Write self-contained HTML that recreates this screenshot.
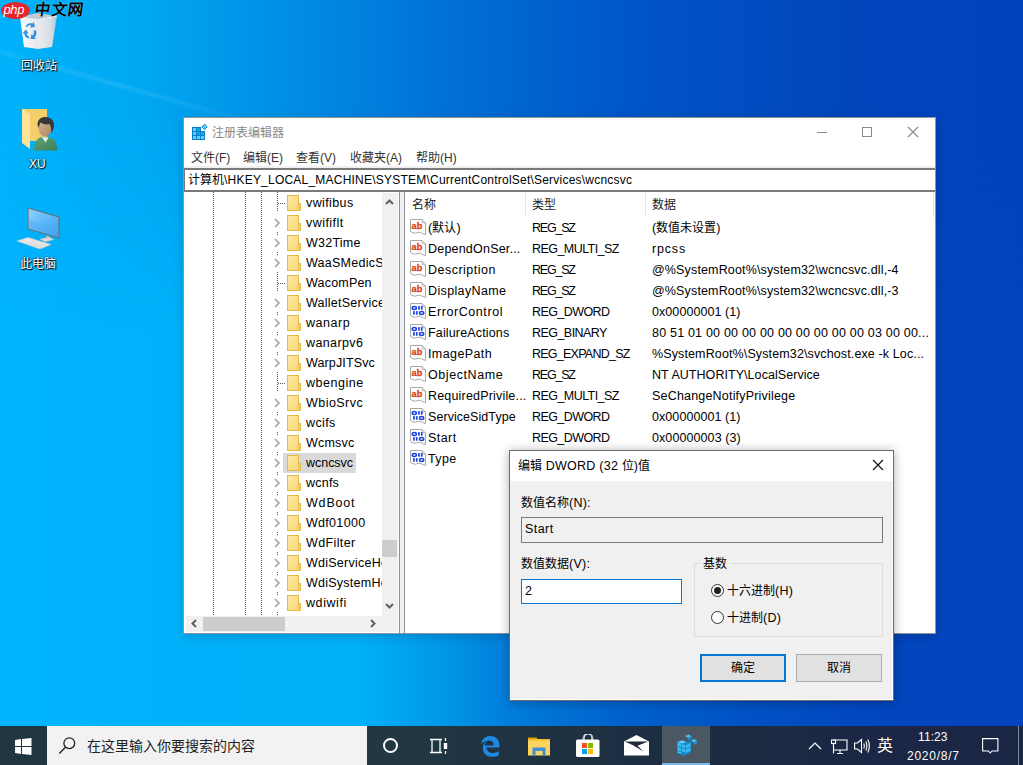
<!DOCTYPE html><html lang="zh-CN"><head><meta charset="utf-8"><style>
*{margin:0;padding:0;box-sizing:border-box}
html,body{width:1023px;height:765px;overflow:hidden}
body{position:relative;font-family:"Liberation Sans",sans-serif;font-size:12px;color:#000;
background:linear-gradient(90deg,#00b4fd 0px,#00b0f9 360px,#0098e8 440px,#007ad8 520px,#0062cc 620px,#0052c4 740px,#0246be 880px,#0244be 1023px)}
.bgtop{position:absolute;left:0;top:0;width:1023px;height:640px;background:linear-gradient(90deg,#00b2fb 0px,#00a8f3 140px,#008ee4 290px,#0070d6 450px,#0054c6 640px,#0246bc 840px,#0242bc 1023px);-webkit-mask-image:linear-gradient(180deg,#000 0,#000 115px,transparent 330px)}
.beam{position:absolute;left:-5px;top:49px;width:330px;height:3px;background:linear-gradient(90deg,rgba(255,255,255,.10),rgba(255,255,255,.13) 40%,rgba(255,255,255,.06) 75%,transparent);transform:rotate(15.6deg);transform-origin:0 0;filter:blur(1.5px)}
.t{position:absolute;white-space:nowrap;line-height:14px;font-size:12.5px;letter-spacing:0.25px}
.cj{font-size:12px;letter-spacing:0}
.win{position:absolute;left:183px;top:117px;width:753px;height:517px;background:#fff;border:1px solid rgba(50,60,70,.55);box-shadow:0 3px 10px rgba(0,0,20,.16)}
.dlg{position:absolute;left:509px;top:450px;width:385px;height:251px;background:#f0f0f0;border:1px solid rgba(0,0,0,.55);box-shadow:inset -1px -1px 0 #fff,0 1px 10px rgba(0,0,30,.32)}
.tb{position:absolute;left:0;top:726px;width:1023px;height:39px;background:linear-gradient(90deg,#213843 0%,#213743 40%,#1e3042 58%,#1c2b42 72%,#1b2744 85%,#1b2645 100%)}
.dv{position:absolute;width:1px;background-image:linear-gradient(#5a5a5a 50%,transparent 50%);background-size:1px 2px}
.dh{position:absolute;height:1px;background-image:linear-gradient(90deg,#5a5a5a 50%,transparent 50%);background-size:2px 1px}
.fold{position:absolute;width:14px;height:16px}
.chev{position:absolute;width:8px;height:10px}
.ico{position:absolute;width:16px;height:16px}
</style></head><body>
<div class="bgtop"></div><div class="beam"></div>
<div class="win"></div>
<svg style="position:absolute;left:191px;top:123px" width="17" height="18" viewBox="0 0 17 18">
<path d="M1 4H10V8H14V17H1Z" fill="#0a7cc8"/>
<g fill="#5fd2ff"><rect x="2" y="5" width="3" height="3"/><rect x="2" y="9" width="3" height="3"/><rect x="2" y="13" width="3" height="3"/><rect x="6" y="13" width="3" height="3"/><rect x="10" y="13" width="3" height="3"/></g>
<g fill="#12a6e2"><rect x="6" y="5" width="3" height="3"/><rect x="6" y="9" width="3" height="3"/><rect x="10" y="9" width="3" height="3"/></g>
<path d="M13.5 1.2L16.2 3.9L13.5 6.6L10.8 3.9Z" fill="#5fd2ff" stroke="#0a7cc8" stroke-width="1"/>
</svg>
<div class="t" style="left:212px;top:126px;color:#8a8a8a"><span class="cj">注册表编辑器</span></div>
<div style="position:absolute;left:817px;top:132px;width:10px;height:1px;background:#8a8a8a"></div>
<div style="position:absolute;left:862px;top:127px;width:10px;height:10px;border:1px solid #8a8a8a"></div>
<svg style="position:absolute;left:907px;top:126px" width="12" height="12" viewBox="0 0 12 12"><path d="M1 1L11 11M11 1L1 11" stroke="#8a8a8a" stroke-width="1.1"/></svg>
<div class="t" style="left:191px;top:151px;color:#333;font-size:12px;letter-spacing:0"><span class="cj">文件</span>(F)</div>
<div class="t" style="left:243px;top:151px;color:#333;font-size:12px;letter-spacing:0"><span class="cj">编辑</span>(E)</div>
<div class="t" style="left:296px;top:151px;color:#333;font-size:12px;letter-spacing:0"><span class="cj">查看</span>(V)</div>
<div class="t" style="left:350px;top:151px;color:#333;font-size:12px;letter-spacing:0"><span class="cj">收藏夹</span>(A)</div>
<div class="t" style="left:416px;top:151px;color:#333;font-size:12px;letter-spacing:0"><span class="cj">帮助</span>(H)</div>
<div style="position:absolute;left:184px;top:166px;width:751px;height:2px;background:#f0f0f0"></div>
<div style="position:absolute;left:184px;top:168px;width:751px;height:24px;border:1px solid #7a7a7a;border-top-width:2px;border-bottom-width:2px;border-right:0;background:#fff"></div>
<div class="t" style="left:188px;top:173px;font-size:12px;letter-spacing:0.22px"><span class="cj">计算机</span>\HKEY_LOCAL_MACHINE\SYSTEM\CurrentControlSet\Services\wcncsvc</div>
<div style="position:absolute;left:184px;top:192px;width:216px;height:441px;background:#fff;border-right:1px solid #8a8f99"></div>
<div style="position:absolute;left:400px;top:192px;width:4px;height:441px;background:#f0f0f0"></div>
<div style="position:absolute;left:404px;top:192px;width:1px;height:441px;background:#8a8f99"></div>
<div style="position:absolute;left:382px;top:193px;width:16px;height:423px;background:#f0f0f0"></div>
<div style="position:absolute;left:382px;top:540px;width:15px;height:17px;background:#cdcdcd"></div>
<div style="position:absolute;left:186px;top:616px;width:212px;height:16px;background:#f0f0f0"></div>
<div style="position:absolute;left:203px;top:617px;width:82px;height:14px;background:#cdcdcd"></div>
<svg style="position:absolute;left:385px;top:198px" width="9" height="8" viewBox="0 0 9 8"><path d="M1 6L4.5 2.5L8 6" fill="none" stroke="#606060" stroke-width="2"/></svg>
<svg style="position:absolute;left:385px;top:602px" width="9" height="8" viewBox="0 0 9 8"><path d="M1 2L4.5 5.5L8 2" fill="none" stroke="#606060" stroke-width="2"/></svg>
<svg style="position:absolute;left:190px;top:619px" width="8" height="9" viewBox="0 0 8 9"><path d="M6 1L2.5 4.5L6 8" fill="none" stroke="#606060" stroke-width="2"/></svg>
<svg style="position:absolute;left:369px;top:619px" width="8" height="9" viewBox="0 0 8 9"><path d="M2 1L5.5 4.5L2 8" fill="none" stroke="#606060" stroke-width="2"/></svg>
<div class="dv" style="left:213px;top:192px;height:423px"></div>
<div class="dv" style="left:245px;top:192px;height:423px"></div>
<div class="dv" style="left:261px;top:192px;height:423px"></div>
<div style="position:absolute;left:185px;top:191px;width:197px;height:424px;overflow:hidden">
<svg class="fold" style="left:102px;top:4px" width="14" height="16" viewBox="0 0 14 16">
<defs><linearGradient id="fg" x1="0" y1="0" x2="1" y2="1"><stop offset="0" stop-color="#fdeaa8"/><stop offset="1" stop-color="#f8d675"/></linearGradient></defs>
<rect x="0.5" y="0.5" width="11" height="15" fill="url(#fg)" stroke="#e6b944"/>
<path d="M11.5 8.5H13.5V15.5H11.5" fill="#f5cf66" stroke="#e6b944"/>
</svg>
<div class="t" style="left:121px;top:5px;letter-spacing:0.386px">vwifibus</div>
<div class="dv" style="left:92px;top:1px;height:20px"></div>
<div class="dh" style="left:93px;top:12px;width:8px"></div>
<svg class="fold" style="left:102px;top:24px" width="14" height="16" viewBox="0 0 14 16">
<defs><linearGradient id="fg" x1="0" y1="0" x2="1" y2="1"><stop offset="0" stop-color="#fdeaa8"/><stop offset="1" stop-color="#f8d675"/></linearGradient></defs>
<rect x="0.5" y="0.5" width="11" height="15" fill="url(#fg)" stroke="#e6b944"/>
<path d="M11.5 8.5H13.5V15.5H11.5" fill="#f5cf66" stroke="#e6b944"/>
</svg>
<div class="t" style="left:121px;top:25px;letter-spacing:0.457px">vwififlt</div>
<svg class="chev" style="left:88px;top:27px" viewBox="0 0 8 10"><path d="M2 1L6 5L2 9" fill="none" stroke="#a0a0a0" stroke-width="1.5"/></svg>
<div class="dv" style="left:92px;top:41px;height:4px"></div>
<svg class="fold" style="left:102px;top:44px" width="14" height="16" viewBox="0 0 14 16">
<defs><linearGradient id="fg" x1="0" y1="0" x2="1" y2="1"><stop offset="0" stop-color="#fdeaa8"/><stop offset="1" stop-color="#f8d675"/></linearGradient></defs>
<rect x="0.5" y="0.5" width="11" height="15" fill="url(#fg)" stroke="#e6b944"/>
<path d="M11.5 8.5H13.5V15.5H11.5" fill="#f5cf66" stroke="#e6b944"/>
</svg>
<div class="t" style="left:121px;top:45px;letter-spacing:0.233px">W32Time</div>
<svg class="chev" style="left:88px;top:47px" viewBox="0 0 8 10"><path d="M2 1L6 5L2 9" fill="none" stroke="#a0a0a0" stroke-width="1.5"/></svg>
<div class="dv" style="left:92px;top:61px;height:4px"></div>
<svg class="fold" style="left:102px;top:64px" width="14" height="16" viewBox="0 0 14 16">
<defs><linearGradient id="fg" x1="0" y1="0" x2="1" y2="1"><stop offset="0" stop-color="#fdeaa8"/><stop offset="1" stop-color="#f8d675"/></linearGradient></defs>
<rect x="0.5" y="0.5" width="11" height="15" fill="url(#fg)" stroke="#e6b944"/>
<path d="M11.5 8.5H13.5V15.5H11.5" fill="#f5cf66" stroke="#e6b944"/>
</svg>
<div class="t" style="left:121px;top:65px;">WaaSMedicS</div>
<svg class="chev" style="left:88px;top:67px" viewBox="0 0 8 10"><path d="M2 1L6 5L2 9" fill="none" stroke="#a0a0a0" stroke-width="1.5"/></svg>
<div class="dv" style="left:92px;top:81px;height:4px"></div>
<svg class="fold" style="left:102px;top:84px" width="14" height="16" viewBox="0 0 14 16">
<defs><linearGradient id="fg" x1="0" y1="0" x2="1" y2="1"><stop offset="0" stop-color="#fdeaa8"/><stop offset="1" stop-color="#f8d675"/></linearGradient></defs>
<rect x="0.5" y="0.5" width="11" height="15" fill="url(#fg)" stroke="#e6b944"/>
<path d="M11.5 8.5H13.5V15.5H11.5" fill="#f5cf66" stroke="#e6b944"/>
</svg>
<div class="t" style="left:121px;top:85px;letter-spacing:0.2px">WacomPen</div>
<div class="dv" style="left:92px;top:81px;height:20px"></div>
<div class="dh" style="left:93px;top:92px;width:8px"></div>
<svg class="fold" style="left:102px;top:104px" width="14" height="16" viewBox="0 0 14 16">
<defs><linearGradient id="fg" x1="0" y1="0" x2="1" y2="1"><stop offset="0" stop-color="#fdeaa8"/><stop offset="1" stop-color="#f8d675"/></linearGradient></defs>
<rect x="0.5" y="0.5" width="11" height="15" fill="url(#fg)" stroke="#e6b944"/>
<path d="M11.5 8.5H13.5V15.5H11.5" fill="#f5cf66" stroke="#e6b944"/>
</svg>
<div class="t" style="left:121px;top:105px;">WalletService</div>
<svg class="chev" style="left:88px;top:107px" viewBox="0 0 8 10"><path d="M2 1L6 5L2 9" fill="none" stroke="#a0a0a0" stroke-width="1.5"/></svg>
<div class="dv" style="left:92px;top:121px;height:4px"></div>
<svg class="fold" style="left:102px;top:124px" width="14" height="16" viewBox="0 0 14 16">
<defs><linearGradient id="fg" x1="0" y1="0" x2="1" y2="1"><stop offset="0" stop-color="#fdeaa8"/><stop offset="1" stop-color="#f8d675"/></linearGradient></defs>
<rect x="0.5" y="0.5" width="11" height="15" fill="url(#fg)" stroke="#e6b944"/>
<path d="M11.5 8.5H13.5V15.5H11.5" fill="#f5cf66" stroke="#e6b944"/>
</svg>
<div class="t" style="left:121px;top:125px;letter-spacing:0.56px">wanarp</div>
<svg class="chev" style="left:88px;top:127px" viewBox="0 0 8 10"><path d="M2 1L6 5L2 9" fill="none" stroke="#a0a0a0" stroke-width="1.5"/></svg>
<div class="dv" style="left:92px;top:141px;height:4px"></div>
<svg class="fold" style="left:102px;top:144px" width="14" height="16" viewBox="0 0 14 16">
<defs><linearGradient id="fg" x1="0" y1="0" x2="1" y2="1"><stop offset="0" stop-color="#fdeaa8"/><stop offset="1" stop-color="#f8d675"/></linearGradient></defs>
<rect x="0.5" y="0.5" width="11" height="15" fill="url(#fg)" stroke="#e6b944"/>
<path d="M11.5 8.5H13.5V15.5H11.5" fill="#f5cf66" stroke="#e6b944"/>
</svg>
<div class="t" style="left:121px;top:145px;letter-spacing:0.386px">wanarpv6</div>
<svg class="chev" style="left:88px;top:147px" viewBox="0 0 8 10"><path d="M2 1L6 5L2 9" fill="none" stroke="#a0a0a0" stroke-width="1.5"/></svg>
<div class="dv" style="left:92px;top:161px;height:4px"></div>
<svg class="fold" style="left:102px;top:164px" width="14" height="16" viewBox="0 0 14 16">
<defs><linearGradient id="fg" x1="0" y1="0" x2="1" y2="1"><stop offset="0" stop-color="#fdeaa8"/><stop offset="1" stop-color="#f8d675"/></linearGradient></defs>
<rect x="0.5" y="0.5" width="11" height="15" fill="url(#fg)" stroke="#e6b944"/>
<path d="M11.5 8.5H13.5V15.5H11.5" fill="#f5cf66" stroke="#e6b944"/>
</svg>
<div class="t" style="left:121px;top:165px;letter-spacing:0.133px">WarpJITSvc</div>
<svg class="chev" style="left:88px;top:167px" viewBox="0 0 8 10"><path d="M2 1L6 5L2 9" fill="none" stroke="#a0a0a0" stroke-width="1.5"/></svg>
<div class="dv" style="left:92px;top:181px;height:4px"></div>
<svg class="fold" style="left:102px;top:184px" width="14" height="16" viewBox="0 0 14 16">
<defs><linearGradient id="fg" x1="0" y1="0" x2="1" y2="1"><stop offset="0" stop-color="#fdeaa8"/><stop offset="1" stop-color="#f8d675"/></linearGradient></defs>
<rect x="0.5" y="0.5" width="11" height="15" fill="url(#fg)" stroke="#e6b944"/>
<path d="M11.5 8.5H13.5V15.5H11.5" fill="#f5cf66" stroke="#e6b944"/>
</svg>
<div class="t" style="left:121px;top:185px;letter-spacing:0.529px">wbengine</div>
<div class="dv" style="left:92px;top:181px;height:20px"></div>
<div class="dh" style="left:93px;top:192px;width:8px"></div>
<svg class="fold" style="left:102px;top:204px" width="14" height="16" viewBox="0 0 14 16">
<defs><linearGradient id="fg" x1="0" y1="0" x2="1" y2="1"><stop offset="0" stop-color="#fdeaa8"/><stop offset="1" stop-color="#f8d675"/></linearGradient></defs>
<rect x="0.5" y="0.5" width="11" height="15" fill="url(#fg)" stroke="#e6b944"/>
<path d="M11.5 8.5H13.5V15.5H11.5" fill="#f5cf66" stroke="#e6b944"/>
</svg>
<div class="t" style="left:121px;top:205px;letter-spacing:0.457px">WbioSrvc</div>
<svg class="chev" style="left:88px;top:207px" viewBox="0 0 8 10"><path d="M2 1L6 5L2 9" fill="none" stroke="#a0a0a0" stroke-width="1.5"/></svg>
<div class="dv" style="left:92px;top:221px;height:4px"></div>
<svg class="fold" style="left:102px;top:224px" width="14" height="16" viewBox="0 0 14 16">
<defs><linearGradient id="fg" x1="0" y1="0" x2="1" y2="1"><stop offset="0" stop-color="#fdeaa8"/><stop offset="1" stop-color="#f8d675"/></linearGradient></defs>
<rect x="0.5" y="0.5" width="11" height="15" fill="url(#fg)" stroke="#e6b944"/>
<path d="M11.5 8.5H13.5V15.5H11.5" fill="#f5cf66" stroke="#e6b944"/>
</svg>
<div class="t" style="left:121px;top:225px;letter-spacing:0.375px">wcifs</div>
<svg class="chev" style="left:88px;top:227px" viewBox="0 0 8 10"><path d="M2 1L6 5L2 9" fill="none" stroke="#a0a0a0" stroke-width="1.5"/></svg>
<div class="dv" style="left:92px;top:241px;height:4px"></div>
<svg class="fold" style="left:102px;top:244px" width="14" height="16" viewBox="0 0 14 16">
<defs><linearGradient id="fg" x1="0" y1="0" x2="1" y2="1"><stop offset="0" stop-color="#fdeaa8"/><stop offset="1" stop-color="#f8d675"/></linearGradient></defs>
<rect x="0.5" y="0.5" width="11" height="15" fill="url(#fg)" stroke="#e6b944"/>
<path d="M11.5 8.5H13.5V15.5H11.5" fill="#f5cf66" stroke="#e6b944"/>
</svg>
<div class="t" style="left:121px;top:245px;letter-spacing:0.22px">Wcmsvc</div>
<svg class="chev" style="left:88px;top:247px" viewBox="0 0 8 10"><path d="M2 1L6 5L2 9" fill="none" stroke="#a0a0a0" stroke-width="1.5"/></svg>
<div class="dv" style="left:92px;top:261px;height:4px"></div>
<div style="position:absolute;left:98px;top:262px;width:73px;height:20px;background:#d9d9d9"></div>
<svg class="fold" style="left:102px;top:264px" width="14" height="16" viewBox="0 0 14 16">
<defs><linearGradient id="fg" x1="0" y1="0" x2="1" y2="1"><stop offset="0" stop-color="#fdeaa8"/><stop offset="1" stop-color="#f8d675"/></linearGradient></defs>
<rect x="0.5" y="0.5" width="11" height="15" fill="url(#fg)" stroke="#e6b944"/>
<path d="M11.5 8.5H13.5V15.5H11.5" fill="#f5cf66" stroke="#e6b944"/>
</svg>
<div class="t" style="left:121px;top:265px;letter-spacing:-0.033px">wcncsvc</div>
<svg class="chev" style="left:88px;top:267px" viewBox="0 0 8 10"><path d="M2 1L6 5L2 9" fill="none" stroke="#a0a0a0" stroke-width="1.5"/></svg>
<div class="dv" style="left:92px;top:281px;height:4px"></div>
<svg class="fold" style="left:102px;top:284px" width="14" height="16" viewBox="0 0 14 16">
<defs><linearGradient id="fg" x1="0" y1="0" x2="1" y2="1"><stop offset="0" stop-color="#fdeaa8"/><stop offset="1" stop-color="#f8d675"/></linearGradient></defs>
<rect x="0.5" y="0.5" width="11" height="15" fill="url(#fg)" stroke="#e6b944"/>
<path d="M11.5 8.5H13.5V15.5H11.5" fill="#f5cf66" stroke="#e6b944"/>
</svg>
<div class="t" style="left:121px;top:285px;letter-spacing:0.225px">wcnfs</div>
<svg class="chev" style="left:88px;top:287px" viewBox="0 0 8 10"><path d="M2 1L6 5L2 9" fill="none" stroke="#a0a0a0" stroke-width="1.5"/></svg>
<div class="dv" style="left:92px;top:301px;height:4px"></div>
<svg class="fold" style="left:102px;top:304px" width="14" height="16" viewBox="0 0 14 16">
<defs><linearGradient id="fg" x1="0" y1="0" x2="1" y2="1"><stop offset="0" stop-color="#fdeaa8"/><stop offset="1" stop-color="#f8d675"/></linearGradient></defs>
<rect x="0.5" y="0.5" width="11" height="15" fill="url(#fg)" stroke="#e6b944"/>
<path d="M11.5 8.5H13.5V15.5H11.5" fill="#f5cf66" stroke="#e6b944"/>
</svg>
<div class="t" style="left:121px;top:305px;letter-spacing:0.82px">WdBoot</div>
<svg class="chev" style="left:88px;top:307px" viewBox="0 0 8 10"><path d="M2 1L6 5L2 9" fill="none" stroke="#a0a0a0" stroke-width="1.5"/></svg>
<div class="dv" style="left:92px;top:321px;height:4px"></div>
<svg class="fold" style="left:102px;top:324px" width="14" height="16" viewBox="0 0 14 16">
<defs><linearGradient id="fg" x1="0" y1="0" x2="1" y2="1"><stop offset="0" stop-color="#fdeaa8"/><stop offset="1" stop-color="#f8d675"/></linearGradient></defs>
<rect x="0.5" y="0.5" width="11" height="15" fill="url(#fg)" stroke="#e6b944"/>
<path d="M11.5 8.5H13.5V15.5H11.5" fill="#f5cf66" stroke="#e6b944"/>
</svg>
<div class="t" style="left:121px;top:325px;letter-spacing:0.3px">Wdf01000</div>
<svg class="chev" style="left:88px;top:327px" viewBox="0 0 8 10"><path d="M2 1L6 5L2 9" fill="none" stroke="#a0a0a0" stroke-width="1.5"/></svg>
<div class="dv" style="left:92px;top:341px;height:4px"></div>
<svg class="fold" style="left:102px;top:344px" width="14" height="16" viewBox="0 0 14 16">
<defs><linearGradient id="fg" x1="0" y1="0" x2="1" y2="1"><stop offset="0" stop-color="#fdeaa8"/><stop offset="1" stop-color="#f8d675"/></linearGradient></defs>
<rect x="0.5" y="0.5" width="11" height="15" fill="url(#fg)" stroke="#e6b944"/>
<path d="M11.5 8.5H13.5V15.5H11.5" fill="#f5cf66" stroke="#e6b944"/>
</svg>
<div class="t" style="left:121px;top:345px;letter-spacing:0.371px">WdFilter</div>
<svg class="chev" style="left:88px;top:347px" viewBox="0 0 8 10"><path d="M2 1L6 5L2 9" fill="none" stroke="#a0a0a0" stroke-width="1.5"/></svg>
<div class="dv" style="left:92px;top:361px;height:4px"></div>
<svg class="fold" style="left:102px;top:364px" width="14" height="16" viewBox="0 0 14 16">
<defs><linearGradient id="fg" x1="0" y1="0" x2="1" y2="1"><stop offset="0" stop-color="#fdeaa8"/><stop offset="1" stop-color="#f8d675"/></linearGradient></defs>
<rect x="0.5" y="0.5" width="11" height="15" fill="url(#fg)" stroke="#e6b944"/>
<path d="M11.5 8.5H13.5V15.5H11.5" fill="#f5cf66" stroke="#e6b944"/>
</svg>
<div class="t" style="left:121px;top:365px;">WdiServiceHost</div>
<svg class="chev" style="left:88px;top:367px" viewBox="0 0 8 10"><path d="M2 1L6 5L2 9" fill="none" stroke="#a0a0a0" stroke-width="1.5"/></svg>
<div class="dv" style="left:92px;top:381px;height:4px"></div>
<svg class="fold" style="left:102px;top:384px" width="14" height="16" viewBox="0 0 14 16">
<defs><linearGradient id="fg" x1="0" y1="0" x2="1" y2="1"><stop offset="0" stop-color="#fdeaa8"/><stop offset="1" stop-color="#f8d675"/></linearGradient></defs>
<rect x="0.5" y="0.5" width="11" height="15" fill="url(#fg)" stroke="#e6b944"/>
<path d="M11.5 8.5H13.5V15.5H11.5" fill="#f5cf66" stroke="#e6b944"/>
</svg>
<div class="t" style="left:121px;top:385px;">WdiSystemHost</div>
<svg class="chev" style="left:88px;top:387px" viewBox="0 0 8 10"><path d="M2 1L6 5L2 9" fill="none" stroke="#a0a0a0" stroke-width="1.5"/></svg>
<div class="dv" style="left:92px;top:401px;height:4px"></div>
<svg class="fold" style="left:102px;top:404px" width="14" height="16" viewBox="0 0 14 16">
<defs><linearGradient id="fg" x1="0" y1="0" x2="1" y2="1"><stop offset="0" stop-color="#fdeaa8"/><stop offset="1" stop-color="#f8d675"/></linearGradient></defs>
<rect x="0.5" y="0.5" width="11" height="15" fill="url(#fg)" stroke="#e6b944"/>
<path d="M11.5 8.5H13.5V15.5H11.5" fill="#f5cf66" stroke="#e6b944"/>
</svg>
<div class="t" style="left:121px;top:405px;letter-spacing:0.583px">wdiwifi</div>
<svg class="chev" style="left:88px;top:407px" viewBox="0 0 8 10"><path d="M2 1L6 5L2 9" fill="none" stroke="#a0a0a0" stroke-width="1.5"/></svg>
<div class="dv" style="left:92px;top:421px;height:4px"></div>
</div>
<div style="position:absolute;left:525px;top:193px;width:1px;height:24px;background:#e5e5e5"></div>
<div style="position:absolute;left:645px;top:193px;width:1px;height:24px;background:#e5e5e5"></div>
<div style="position:absolute;left:933px;top:193px;width:1px;height:24px;background:#e5e5e5"></div>
<div class="t" style="left:412px;top:198px;color:#222"><span class="cj">名称</span></div>
<div class="t" style="left:532px;top:198px;color:#222"><span class="cj">类型</span></div>
<div class="t" style="left:652px;top:198px;color:#222"><span class="cj">数据</span></div>
<svg class="ico" style="left:410px;top:219px" viewBox="0 0 16 16"><path d="M0.5 0.5H12L15.5 4V15.6L13 14.6L10.5 13.4L8 13.3L5.5 14.2L3 13.8L0.5 12.4Z" fill="#fff" stroke="#a3a3a3" stroke-width="0.95"/><path d="M12 0.6L12.4 3.6L15.4 4" fill="none" stroke="#a3a3a3" stroke-width="0.8"/>
<text x="1.5" y="10.1" font-family="Liberation Sans" font-weight="bold" font-size="9.2" fill="#dc3f14" stroke="#dc3f14" stroke-width="0.3" letter-spacing="0.1">ab</text></svg>
<div class="t" style="left:428px;top:221px;letter-spacing:0.2px;">(<span class="cj">默认</span>)</div>
<div class="t" style="left:532px;top:221px;letter-spacing:-1.22px;">REG_SZ</div>
<div class="t" style="left:652px;top:221px;letter-spacing:0.183px;">(<span class="cj">数值未设置</span>)</div>
<svg class="ico" style="left:410px;top:240px" viewBox="0 0 16 16"><path d="M0.5 0.5H12L15.5 4V15.6L13 14.6L10.5 13.4L8 13.3L5.5 14.2L3 13.8L0.5 12.4Z" fill="#fff" stroke="#a3a3a3" stroke-width="0.95"/><path d="M12 0.6L12.4 3.6L15.4 4" fill="none" stroke="#a3a3a3" stroke-width="0.8"/>
<text x="1.5" y="10.1" font-family="Liberation Sans" font-weight="bold" font-size="9.2" fill="#dc3f14" stroke="#dc3f14" stroke-width="0.3" letter-spacing="0.1">ab</text></svg>
<div class="t" style="left:428px;top:242px;letter-spacing:0.208px;">DependOnSer...</div>
<div class="t" style="left:532px;top:242px;letter-spacing:-0.555px;">REG_MULTI_SZ</div>
<div class="t" style="left:652px;top:242px;letter-spacing:0.825px;">rpcss</div>
<svg class="ico" style="left:410px;top:261px" viewBox="0 0 16 16"><path d="M0.5 0.5H12L15.5 4V15.6L13 14.6L10.5 13.4L8 13.3L5.5 14.2L3 13.8L0.5 12.4Z" fill="#fff" stroke="#a3a3a3" stroke-width="0.95"/><path d="M12 0.6L12.4 3.6L15.4 4" fill="none" stroke="#a3a3a3" stroke-width="0.8"/>
<text x="1.5" y="10.1" font-family="Liberation Sans" font-weight="bold" font-size="9.2" fill="#dc3f14" stroke="#dc3f14" stroke-width="0.3" letter-spacing="0.1">ab</text></svg>
<div class="t" style="left:428px;top:263px;letter-spacing:0.49px;">Description</div>
<div class="t" style="left:532px;top:263px;letter-spacing:-1.22px;">REG_SZ</div>
<div class="t" style="left:652px;top:263px;letter-spacing:0.147px;">@%SystemRoot%\system32\wcncsvc.dll,-4</div>
<svg class="ico" style="left:410px;top:282px" viewBox="0 0 16 16"><path d="M0.5 0.5H12L15.5 4V15.6L13 14.6L10.5 13.4L8 13.3L5.5 14.2L3 13.8L0.5 12.4Z" fill="#fff" stroke="#a3a3a3" stroke-width="0.95"/><path d="M12 0.6L12.4 3.6L15.4 4" fill="none" stroke="#a3a3a3" stroke-width="0.8"/>
<text x="1.5" y="10.1" font-family="Liberation Sans" font-weight="bold" font-size="9.2" fill="#dc3f14" stroke="#dc3f14" stroke-width="0.3" letter-spacing="0.1">ab</text></svg>
<div class="t" style="left:428px;top:284px;letter-spacing:0.36px;">DisplayName</div>
<div class="t" style="left:532px;top:284px;letter-spacing:-1.22px;">REG_SZ</div>
<div class="t" style="left:652px;top:284px;letter-spacing:0.147px;">@%SystemRoot%\system32\wcncsvc.dll,-3</div>
<svg class="ico" style="left:410px;top:303px" viewBox="0 0 16 16"><path d="M0.5 0.5H12L15.5 4V15.6L13 14.6L10.5 13.4L8 13.3L5.5 14.2L3 13.8L0.5 12.4Z" fill="#fff" stroke="#a3a3a3" stroke-width="0.95"/><path d="M12 0.6L12.4 3.6L15.4 4" fill="none" stroke="#a3a3a3" stroke-width="0.8"/>
<g fill="none" stroke="#1a44e2" stroke-width="1.5"><ellipse cx="4.3" cy="4.9" rx="2.1" ry="1.5"/><ellipse cx="11.6" cy="9.9" rx="2.1" ry="1.5"/></g>
<g fill="#1a44e2"><rect x="8.1" y="3.1" width="1.7" height="3.6"/><rect x="10.9" y="3.1" width="1.7" height="3.6"/><rect x="3.1" y="8.1" width="1.7" height="3.6"/><rect x="5.9" y="8.1" width="1.7" height="3.6"/></g></svg>
<div class="t" style="left:428px;top:305px;letter-spacing:0.582px;">ErrorControl</div>
<div class="t" style="left:532px;top:305px;letter-spacing:-0.575px;">REG_DWORD</div>
<div class="t" style="left:652px;top:305px;letter-spacing:0.069px;">0x00000001 (1)</div>
<svg class="ico" style="left:410px;top:324px" viewBox="0 0 16 16"><path d="M0.5 0.5H12L15.5 4V15.6L13 14.6L10.5 13.4L8 13.3L5.5 14.2L3 13.8L0.5 12.4Z" fill="#fff" stroke="#a3a3a3" stroke-width="0.95"/><path d="M12 0.6L12.4 3.6L15.4 4" fill="none" stroke="#a3a3a3" stroke-width="0.8"/>
<g fill="none" stroke="#1a44e2" stroke-width="1.5"><ellipse cx="4.3" cy="4.9" rx="2.1" ry="1.5"/><ellipse cx="11.6" cy="9.9" rx="2.1" ry="1.5"/></g>
<g fill="#1a44e2"><rect x="8.1" y="3.1" width="1.7" height="3.6"/><rect x="10.9" y="3.1" width="1.7" height="3.6"/><rect x="3.1" y="8.1" width="1.7" height="3.6"/><rect x="5.9" y="8.1" width="1.7" height="3.6"/></g></svg>
<div class="t" style="left:428px;top:326px;letter-spacing:0.154px;">FailureActions</div>
<div class="t" style="left:532px;top:326px;letter-spacing:-0.544px;">REG_BINARY</div>
<div class="t" style="left:652px;top:326px;letter-spacing:0.202px;">80 51 01 00 00 00 00 00 00 00 00 00 03 00 00...</div>
<svg class="ico" style="left:410px;top:345px" viewBox="0 0 16 16"><path d="M0.5 0.5H12L15.5 4V15.6L13 14.6L10.5 13.4L8 13.3L5.5 14.2L3 13.8L0.5 12.4Z" fill="#fff" stroke="#a3a3a3" stroke-width="0.95"/><path d="M12 0.6L12.4 3.6L15.4 4" fill="none" stroke="#a3a3a3" stroke-width="0.8"/>
<text x="1.5" y="10.1" font-family="Liberation Sans" font-weight="bold" font-size="9.2" fill="#dc3f14" stroke="#dc3f14" stroke-width="0.3" letter-spacing="0.1">ab</text></svg>
<div class="t" style="left:428px;top:347px;letter-spacing:0.4px;">ImagePath</div>
<div class="t" style="left:532px;top:347px;letter-spacing:-0.758px;">REG_EXPAND_SZ</div>
<div class="t" style="left:652px;top:347px;letter-spacing:0.124px;">%SystemRoot%\System32\svchost.exe -k Loc...</div>
<svg class="ico" style="left:410px;top:366px" viewBox="0 0 16 16"><path d="M0.5 0.5H12L15.5 4V15.6L13 14.6L10.5 13.4L8 13.3L5.5 14.2L3 13.8L0.5 12.4Z" fill="#fff" stroke="#a3a3a3" stroke-width="0.95"/><path d="M12 0.6L12.4 3.6L15.4 4" fill="none" stroke="#a3a3a3" stroke-width="0.8"/>
<text x="1.5" y="10.1" font-family="Liberation Sans" font-weight="bold" font-size="9.2" fill="#dc3f14" stroke="#dc3f14" stroke-width="0.3" letter-spacing="0.1">ab</text></svg>
<div class="t" style="left:428px;top:368px;letter-spacing:0.578px;">ObjectName</div>
<div class="t" style="left:532px;top:368px;letter-spacing:-1.22px;">REG_SZ</div>
<div class="t" style="left:652px;top:368px;letter-spacing:0.054px;">NT AUTHORITY\LocalService</div>
<svg class="ico" style="left:410px;top:387px" viewBox="0 0 16 16"><path d="M0.5 0.5H12L15.5 4V15.6L13 14.6L10.5 13.4L8 13.3L5.5 14.2L3 13.8L0.5 12.4Z" fill="#fff" stroke="#a3a3a3" stroke-width="0.95"/><path d="M12 0.6L12.4 3.6L15.4 4" fill="none" stroke="#a3a3a3" stroke-width="0.8"/>
<text x="1.5" y="10.1" font-family="Liberation Sans" font-weight="bold" font-size="9.2" fill="#dc3f14" stroke="#dc3f14" stroke-width="0.3" letter-spacing="0.1">ab</text></svg>
<div class="t" style="left:428px;top:389px;letter-spacing:0.182px;">RequiredPrivile...</div>
<div class="t" style="left:532px;top:389px;letter-spacing:-0.555px;">REG_MULTI_SZ</div>
<div class="t" style="left:652px;top:389px;letter-spacing:0.191px;">SeChangeNotifyPrivilege</div>
<svg class="ico" style="left:410px;top:408px" viewBox="0 0 16 16"><path d="M0.5 0.5H12L15.5 4V15.6L13 14.6L10.5 13.4L8 13.3L5.5 14.2L3 13.8L0.5 12.4Z" fill="#fff" stroke="#a3a3a3" stroke-width="0.95"/><path d="M12 0.6L12.4 3.6L15.4 4" fill="none" stroke="#a3a3a3" stroke-width="0.8"/>
<g fill="none" stroke="#1a44e2" stroke-width="1.5"><ellipse cx="4.3" cy="4.9" rx="2.1" ry="1.5"/><ellipse cx="11.6" cy="9.9" rx="2.1" ry="1.5"/></g>
<g fill="#1a44e2"><rect x="8.1" y="3.1" width="1.7" height="3.6"/><rect x="10.9" y="3.1" width="1.7" height="3.6"/><rect x="3.1" y="8.1" width="1.7" height="3.6"/><rect x="5.9" y="8.1" width="1.7" height="3.6"/></g></svg>
<div class="t" style="left:428px;top:410px;letter-spacing:0.062px;">ServiceSidType</div>
<div class="t" style="left:532px;top:410px;letter-spacing:-0.575px;">REG_DWORD</div>
<div class="t" style="left:652px;top:410px;letter-spacing:0.069px;">0x00000001 (1)</div>
<svg class="ico" style="left:410px;top:429px" viewBox="0 0 16 16"><path d="M0.5 0.5H12L15.5 4V15.6L13 14.6L10.5 13.4L8 13.3L5.5 14.2L3 13.8L0.5 12.4Z" fill="#fff" stroke="#a3a3a3" stroke-width="0.95"/><path d="M12 0.6L12.4 3.6L15.4 4" fill="none" stroke="#a3a3a3" stroke-width="0.8"/>
<g fill="none" stroke="#1a44e2" stroke-width="1.5"><ellipse cx="4.3" cy="4.9" rx="2.1" ry="1.5"/><ellipse cx="11.6" cy="9.9" rx="2.1" ry="1.5"/></g>
<g fill="#1a44e2"><rect x="8.1" y="3.1" width="1.7" height="3.6"/><rect x="10.9" y="3.1" width="1.7" height="3.6"/><rect x="3.1" y="8.1" width="1.7" height="3.6"/><rect x="5.9" y="8.1" width="1.7" height="3.6"/></g></svg>
<div class="t" style="left:428px;top:431px;letter-spacing:0.45px;">Start</div>
<div class="t" style="left:532px;top:431px;letter-spacing:-0.575px;">REG_DWORD</div>
<div class="t" style="left:652px;top:431px;letter-spacing:0.085px;">0x00000003 (3)</div>
<svg class="ico" style="left:410px;top:450px" viewBox="0 0 16 16"><path d="M0.5 0.5H12L15.5 4V15.6L13 14.6L10.5 13.4L8 13.3L5.5 14.2L3 13.8L0.5 12.4Z" fill="#fff" stroke="#a3a3a3" stroke-width="0.95"/><path d="M12 0.6L12.4 3.6L15.4 4" fill="none" stroke="#a3a3a3" stroke-width="0.8"/>
<g fill="none" stroke="#1a44e2" stroke-width="1.5"><ellipse cx="4.3" cy="4.9" rx="2.1" ry="1.5"/><ellipse cx="11.6" cy="9.9" rx="2.1" ry="1.5"/></g>
<g fill="#1a44e2"><rect x="8.1" y="3.1" width="1.7" height="3.6"/><rect x="10.9" y="3.1" width="1.7" height="3.6"/><rect x="3.1" y="8.1" width="1.7" height="3.6"/><rect x="5.9" y="8.1" width="1.7" height="3.6"/></g></svg>
<div class="t" style="left:428px;top:452px;letter-spacing:0.4px;">Type</div>
<div class="t" style="left:532px;top:452px;letter-spacing:-0.575px;">REG_DWORD</div>
<div class="t" style="left:652px;top:452px;">0x00000020 (32)</div>
<div class="dlg"></div>
<div style="position:absolute;left:510px;top:451px;width:383px;height:30px;background:#fff"></div>
<div class="t" style="left:518px;top:459px;"><span class="cj">编辑</span> DWORD (32 <span class="cj">位</span>)<span class="cj">值</span></div>
<svg style="position:absolute;left:872px;top:459px" width="12" height="12" viewBox="0 0 12 12"><path d="M1 1L11 11M11 1L1 11" stroke="#111" stroke-width="1.15"/></svg>
<div class="t" style="left:521px;top:496px;"><span class="cj">数值名称</span>(N):</div>
<div style="position:absolute;left:521px;top:517px;width:362px;height:26px;border:1px solid #7a7a7a;background:#f0f0f0"></div>
<div class="t" style="left:525px;top:522px;letter-spacing:0.45px;">Start</div>
<div class="t" style="left:521px;top:557px;"><span class="cj">数值数据</span>(V):</div>
<div style="position:absolute;left:521px;top:579px;width:161px;height:25px;border:1px solid #0078d7;background:#fff"></div>
<div class="t" style="left:525px;top:584px;">2</div>
<div style="position:absolute;left:694px;top:563px;width:189px;height:74px;border:1px solid #dcdcdc"></div>
<div style="position:absolute;left:700px;top:556px;width:30px;height:14px;background:#f0f0f0"></div>
<div class="t" style="left:703px;top:557px;"><span class="cj">基数</span></div>
<div style="position:absolute;left:711px;top:584px;width:13px;height:13px;border:1px solid #333;border-radius:50%;background:#fff"></div>
<div style="position:absolute;left:714px;top:587px;width:7px;height:7px;border-radius:50%;background:#222"></div>
<div class="t" style="left:727px;top:584px;"><span class="cj">十六进制</span>(H)</div>
<div style="position:absolute;left:711px;top:611px;width:13px;height:13px;border:1px solid #333;border-radius:50%;background:#fff"></div>
<div class="t" style="left:727px;top:611px;"><span class="cj">十进制</span>(D)</div>
<div style="position:absolute;left:700px;top:654px;width:86px;height:28px;border:2px solid #0078d7;background:#e1e1e1"></div>
<div class="t" style="left:731px;top:661px;"><span class="cj">确定</span></div>
<div style="position:absolute;left:796px;top:654px;width:86px;height:28px;border:1px solid #adadad;background:#e1e1e1"></div>
<div class="t" style="left:827px;top:661px;"><span class="cj">取消</span></div>
<div class="tb"></div>
<div style="position:absolute;left:0;top:726px;width:47px;height:39px;background:#203640"></div>
<svg style="position:absolute;left:15px;top:738px" width="17" height="17" viewBox="0 0 17 17"><g fill="#fff">
<path d="M0 1.9L6 1.1V8H0Z"/><path d="M7 1L16.5 0V8H7Z"/><path d="M0 9H6V15.9L0 15.1Z"/><path d="M7 9H16.5V17L7 16Z"/></g></svg>
<div style="position:absolute;left:47px;top:726px;width:320px;height:39px;background:#f2f2f2"></div>
<svg style="position:absolute;left:58px;top:736px" width="18" height="19" viewBox="0 0 18 19"><circle cx="11.3" cy="7.2" r="5.4" fill="none" stroke="#222" stroke-width="1.3"/><path d="M7.4 11.2L1.3 17.5" stroke="#222" stroke-width="1.4"/></svg>
<div class="t" style="left:87px;top:738px;font-size:14px;letter-spacing:0;line-height:16px;color:#222">在这里输入你要搜索的内容</div>
<div style="position:absolute;left:383px;top:738px;width:15px;height:15px;border:2px solid #fff;border-radius:50%"></div>
<svg style="position:absolute;left:430px;top:738px" width="18" height="16" viewBox="0 0 18 16"><g fill="none" stroke="#fff" stroke-width="1.3">
<path d="M0 1.5H12M0 14.5H12M2 1.5V14.5M10 1.5V14.5"/><path d="M15.5 0V3M15.5 13V16"/></g><rect x="13.8" y="5" width="3.4" height="6" fill="#fff"/></svg>
<svg style="position:absolute;left:479px;top:735px" width="22" height="22" viewBox="0 0 22 22">
<path d="M2 9C3 3.5 7 1 11.5 1C17 1 20.5 5 20.5 10.5V12.5H7.5C7.8 16 10.5 18 13.8 18C16 18 18 17.4 19.8 16.3V20.3C17.8 21.3 15.5 21.8 13 21.8C7.2 21.8 3.8 18 3.8 13C3.8 9.2 6 6.5 9 5.8C7 7 5.8 8.8 5.6 10.5H14.6C14.6 7.2 12.8 5.5 10.5 5.5C7 5.5 4 7 2 9Z" fill="#1e88e5"/></svg>
<svg style="position:absolute;left:528px;top:737px" width="22" height="19" viewBox="0 0 22 19">
<path d="M0 0.5H8.5L10 2.5H0Z" fill="#e0a000"/><rect x="0" y="2" width="22" height="16.5" fill="#fcd45e"/><rect x="0" y="2" width="22" height="1.6" fill="#f2bb30"/>
<path d="M4.5 18.5V10.5H17.5V18.5H14.5V14H7.5V18.5Z" fill="#3d8fdc"/></svg>
<svg style="position:absolute;left:576px;top:734px" width="24" height="24" viewBox="0 0 24 24">
<path d="M8 6V4A4 4 0 0 1 16 4V6" fill="none" stroke="#fff" stroke-width="1.2"/><path d="M7 7V4A5 5 0 0 1 17 4V7" fill="none" stroke="#fff" stroke-width="0.6"/>
<rect x="0" y="5.5" width="23.5" height="17.5" rx="1.5" fill="#fff"/>
<rect x="6" y="9" width="5" height="5" fill="#f25022"/><rect x="12" y="9" width="5" height="5" fill="#7fba00"/><rect x="6" y="15" width="5" height="5" fill="#00a4ef"/><rect x="12" y="15" width="5" height="5" fill="#ffb900"/></svg>
<svg style="position:absolute;left:624px;top:735px" width="26" height="21" viewBox="0 0 26 21">
<path d="M0 6.5L12.5 0L25 6.5V20.5H0Z" fill="#fff"/><path d="M0.8 6.6H24.2L13.5 10.8L19.5 16.5L9 10.2Z" fill="#1e2a38"/></svg>
<div style="position:absolute;left:662px;top:726px;width:48px;height:39px;background:#4b5763"></div>
<div style="position:absolute;left:662px;top:763px;width:48px;height:2px;background:#7ab8ec"></div>
<svg style="position:absolute;left:676px;top:733px" width="22" height="23" viewBox="0 0 22 23">
<path d="M1 9L6 7L11 9L15 8L15 19L8 23L1 20Z" fill="#1588c8"/>
<g fill="#3cb8f0"><path d="M1.5 9.5L5 10.8V14L1.5 12.8Z"/><path d="M5.8 11L9.3 12.2V15.4L5.8 14.2Z"/><path d="M1.5 13.8L5 15V18.2L1.5 17Z"/><path d="M5.8 15.2L9.3 16.4V19.6L5.8 18.4Z"/><path d="M1.5 18L5 19.2V21L1.5 19.8Z"/><path d="M10 12.2L14.5 10V13.5L10 15.5Z"/><path d="M10 16.5L14.5 14.5V18L10 20Z"/></g>
<g fill="#5fd0ff"><path d="M1.5 9L6 7.5L10.5 9L6 10.5Z"/></g>
<path d="M9 3L12.5 1.5L15.5 3.2L12 4.8Z" fill="#48c0f4"/><path d="M12 4.8L15.5 3.2V6L12 7.5Z" fill="#1a90d0"/>
<path d="M15 7.5L18.5 6L21 7.8L17.5 9.5Z" fill="#48c0f4"/><path d="M17.5 9.5L21 7.8V10.5L17.5 12Z" fill="#1a90d0"/></svg>
<svg style="position:absolute;left:808px;top:741px" width="14" height="9" viewBox="0 0 14 9"><path d="M1 8L7 2L13 8" fill="none" stroke="#fff" stroke-width="1.2"/></svg>
<svg style="position:absolute;left:831px;top:739px" width="17" height="15" viewBox="0 0 17 15"><g fill="none" stroke="#fff" stroke-width="1.1">
<path d="M2.5 1H16V11H3"/><path d="M2.5 14.5V5"/><rect x="0.5" y="1" width="4" height="3.5"/><path d="M6 14.5H12M9 11V14.5"/></g></svg>
<svg style="position:absolute;left:854px;top:738px" width="17" height="16" viewBox="0 0 17 16"><g fill="none" stroke="#fff" stroke-width="1.1">
<path d="M0.6 5H3.5L7.5 1.5V14.5L3.5 11H0.6Z"/><path d="M9.8 5.5Q11 8 9.8 10.5"/><path d="M11.8 3.5Q14 8 11.8 12.5"/><path d="M13.8 1.5Q17 8 13.8 14.5"/></g></svg>
<div class="t" style="left:877px;top:737px;font-size:16px;letter-spacing:0;line-height:17px;color:#fff">英</div>
<div class="t" style="left:918px;top:730px;font-size:12px;letter-spacing:0.1px;color:#fff">11:23</div>
<div class="t" style="left:907px;top:749px;font-size:12px;letter-spacing:0.75px;color:#fff">2020/8/7</div>
<svg style="position:absolute;left:982px;top:738px" width="17" height="17" viewBox="0 0 17 17"><path d="M0.6 0.6H15.9V13H10L8.2 15L6.4 13H0.6Z" fill="none" stroke="#fff" stroke-width="1.1"/></svg>
<div style="position:absolute;left:1018px;top:726px;width:1px;height:39px;background:#7a8699"></div>
<svg style="position:absolute;left:18px;top:8px" width="42" height="44" viewBox="0 0 42 44">
<defs><linearGradient id="rbl" x1="0" x2="1"><stop offset="0" stop-color="#fbfbfb"/><stop offset="1" stop-color="#e4e7ea"/></linearGradient>
<linearGradient id="rbr" x1="0" x2="1"><stop offset="0" stop-color="#e9ecee"/><stop offset="0.7" stop-color="#d5dde3"/><stop offset="1" stop-color="#9fc3dc"/></linearGradient></defs>
<path d="M2 9L19 5L39 8L20 12Z" fill="#c3ccd3"/>
<path d="M2 9L20 12L20 41L6 39Z" fill="url(#rbl)"/>
<path d="M20 12L39 8L34 39L20 41Z" fill="url(#rbr)"/>
<path d="M2 9L20 12L39 8" fill="none" stroke="#f4f6f8" stroke-width="1"/>
<g fill="#2f8fe6">
<path d="M7.5 18.5C9 15.5 12 14.5 14.5 15.5L15.5 13.8L17 19L12 19.5L13.3 17.6C11.5 17 9.8 17.6 9 19Z"/>
<path d="M17.5 22C19 24.5 18.5 27.5 16.5 29.5L17.8 31L12.5 31L13.5 26L14.8 27.6C16 26.3 16.2 24.5 15.5 23Z"/>
<path d="M11 30.5C8.5 30.3 6.5 28.3 6.3 25.5L4.5 25.3L8 21.5L10.5 25.5L8.4 25.6C8.6 27 9.6 28.2 11 28.5Z"/>
</g></svg>
<div class="t" style="left:21px;top:59px;font-size:12px;letter-spacing:0;color:#fff;text-shadow:0 0 2px #000,1px 1px 1px #000">回收站</div>
<svg style="position:absolute;left:21px;top:108px" width="38" height="44" viewBox="0 0 38 44">
<defs><linearGradient id="face" x1="0" y1="0" x2="1" y2="1"><stop offset="0" stop-color="#d8b48f"/><stop offset="1" stop-color="#a98463"/></linearGradient>
<linearGradient id="jk" x1="0" y1="0" x2="1" y2="1"><stop offset="0" stop-color="#5da77a"/><stop offset="1" stop-color="#3f7d55"/></linearGradient></defs>
<path d="M1 1H26V33H1Z" fill="#f3cf6a"/><path d="M1 1L9 6V41L1 35Z" fill="#fde39a"/>
<path d="M13 42.5C13 36 14.5 31.5 19 29.5L23 28.5L27 29L31.5 30.5C35 32.5 36 37 36 42.5Z" fill="url(#jk)"/>
<path d="M21 29L24.5 34.5L27.5 29.5Z" fill="#f2f2f2"/>
<path d="M17.5 19.5C17.5 14 20.5 11.5 24.5 11.5C28.5 11.5 31 14.5 31 19C31 24 28 28.5 24 28.5C20 28.5 17.5 24.5 17.5 19.5Z" fill="url(#face)"/>
<path d="M16.5 17C16.5 11.5 20 9 24.5 9C30 9 33.5 12.5 33 18.5C32.5 21.5 31 24 30 25C30.5 21 30 18 28.5 16C26 17 22 16.5 19.5 14.5C18.5 16 18 18 18 20Z" fill="#383838"/></svg>
<div class="t" style="left:29px;top:157px;font-size:12px;letter-spacing:0;color:#fff;text-shadow:0 0 2px #000,1px 1px 1px #000">XU</div>
<svg style="position:absolute;left:16px;top:207px" width="44" height="43" viewBox="0 0 44 43">
<defs><linearGradient id="scr" x1="0" y1="0" x2="1" y2="1"><stop offset="0" stop-color="#8fd3ff"/><stop offset="0.5" stop-color="#5cb8f8"/><stop offset="1" stop-color="#3f9ff0"/></linearGradient></defs>
<path d="M12 1L43 10V31L12 22Z" fill="url(#scr)" stroke="#6b6b6b" stroke-width="1"/>
<path d="M13 13L42 21V30L13 21.5Z" fill="#4aa6f2" opacity="0.35"/>
<path d="M30 28.5L33 29.3L33 32L30 31Z" fill="#bdbdbd"/>
<path d="M24 32L33 30L38 32.5L29 35Z" fill="#d9d9d9" stroke="#b0b0b0" stroke-width="0.5"/>
<path d="M1 34L12 30.5L35 37.5L24 42Z" fill="#eeeeee" stroke="#c4c4c4" stroke-width="0.6"/>
<g stroke="#c9c9c9" stroke-width="0.5"><path d="M4.5 35L27 40.8M8 33.8L30.5 39.5M5 33L28 41M11 32L31 38.5"/></g></svg>
<div class="t" style="left:20px;top:257px;font-size:12px;letter-spacing:0;color:#fff;text-shadow:0 0 2px #000,1px 1px 1px #000">此电脑</div>
<svg style="position:absolute;left:0px;top:0px" width="34" height="22" viewBox="0 0 34 22">
<ellipse cx="15.5" cy="10.5" rx="14.3" ry="8.6" fill="#e5242b"/>
<text x="3.5" y="14.3" font-family="Liberation Sans" font-style="italic" font-size="13" fill="#fff" letter-spacing="-0.4">php</text></svg>
<div class="t" style="left:34px;top:1px;font-size:15.5px;letter-spacing:0.3px;line-height:17px;color:#000;font-weight:bold;transform:skewX(-8deg);transform-origin:0 100%;text-shadow:0 0 1px rgba(255,255,255,.7)">中文网</div>
</body></html>
